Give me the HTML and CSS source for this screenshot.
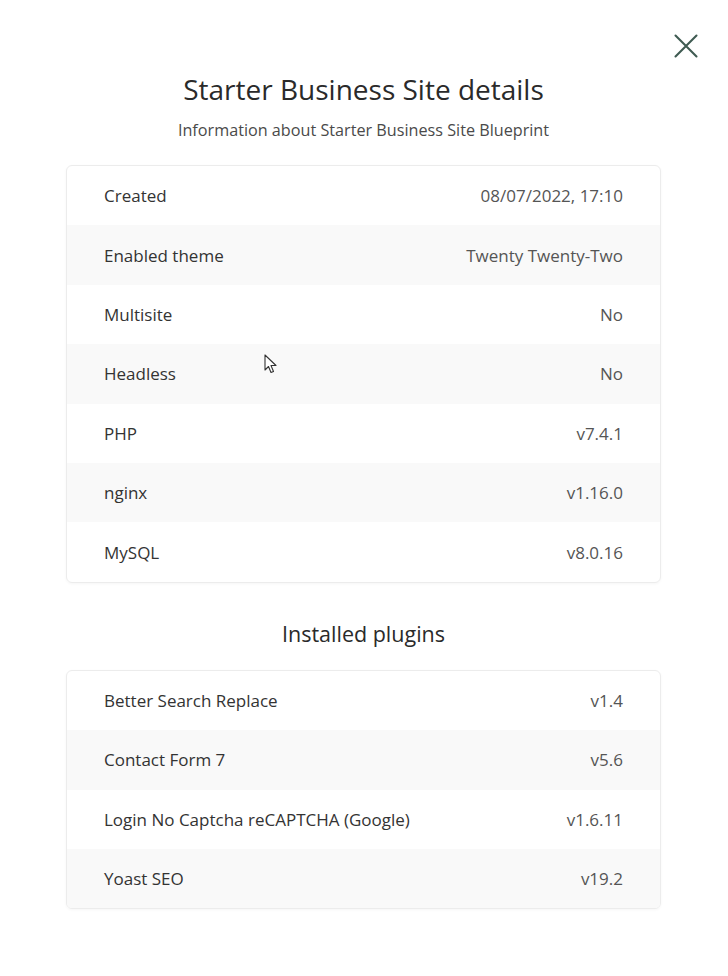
FILE: index.html
```html
<!DOCTYPE html>
<html>
<head>
<meta charset="utf-8">
<link rel="stylesheet" href="styles.css">
</head>
<body>
<div class="modal">
  <button class="close" aria-label="Close">
    <svg width="26" height="26" viewBox="0 0 26 26"><path d="M2.5 2.5 L23.5 23.5 M23.5 2.5 L2.5 23.5" stroke="#3f5b52" stroke-width="2.1" fill="none" stroke-linecap="round"/></svg>
  </button>
  <h1 class="title">Starter Business Site details</h1>
  <p class="subtitle">Information about Starter Business Site Blueprint</p>
  <div class="card">
    <div class="row"><span class="label">Created</span><span class="value">08/07/2022, 17:10</span></div>
    <div class="row"><span class="label">Enabled theme</span><span class="value">Twenty Twenty-Two</span></div>
    <div class="row"><span class="label">Multisite</span><span class="value">No</span></div>
    <div class="row"><span class="label">Headless</span><span class="value">No</span></div>
    <div class="row"><span class="label">PHP</span><span class="value">v7.4.1</span></div>
    <div class="row"><span class="label">nginx</span><span class="value">v1.16.0</span></div>
    <div class="row"><span class="label">MySQL</span><span class="value">v8.0.16</span></div>
  </div>
  <h2 class="section">Installed plugins</h2>
  <div class="card">
    <div class="row"><span class="label">Better Search Replace</span><span class="value">v1.4</span></div>
    <div class="row"><span class="label">Contact Form 7</span><span class="value">v5.6</span></div>
    <div class="row"><span class="label">Login No Captcha reCAPTCHA (Google)</span><span class="value">v1.6.11</span></div>
    <div class="row"><span class="label">Yoast SEO</span><span class="value">v19.2</span></div>
  </div>
  <svg class="cursor" width="16" height="22" viewBox="0 0 16 22"><path d="M1 1 L1 16 L4.5 12.5 L7 18.5 L9.5 17.5 L7 11.5 L12 11.5 Z" fill="#fff" stroke="#333" stroke-width="1.1" stroke-linejoin="round"/></svg>
</div>
</body>
</html>
```
FILE: styles.css
```css
html, body {
  margin: 0;
  padding: 0;
  background: #ffffff;
}
body {
  font-family: "Open Sans", Lato, sans-serif;
  color: #333;
}
.modal {
  position: relative;
  width: 728px;
  height: 976px;
  box-sizing: border-box;
  padding: 71px 67px 0 66px;
}
.close {
  position: absolute;
  top: 33px;
  right: 29px;
  width: 26px;
  height: 26px;
  padding: 0;
  border: 0;
  background: none;
}
.close svg { display: block; }
.title {
  margin: 0;
  text-align: center;
  font-size: 28px;
  font-weight: 400;
  line-height: 36px;
  color: #2a2a2a;
}
.subtitle {
  margin: 13px 0 0;
  text-align: center;
  font-size: 16.2px;
  line-height: 21px;
  color: #4a4a4a;
}
.card {
  margin-top: 24px;
  border: 1px solid #ececec;
  border-radius: 6px;
  overflow: hidden;
  box-shadow: 0 1px 3px rgba(0,0,0,0.04);
}
.row {
  display: flex;
  justify-content: space-between;
  align-items: center;
  height: 59.4px;
  padding: 0 37px 0 37px;
  font-size: 17px;
}
.row:nth-child(even) { background: #f9f9f9; }
.label { color: #333; }
.value { color: #555; }
.section {
  margin: 37px 0 0;
  text-align: center;
  font-size: 21.5px;
  font-weight: 400;
  line-height: 28px;
  color: #2a2a2a;
}
.section + .card { margin-top: 22px; }
.cursor {
  position: absolute;
  left: 264px;
  top: 354px;
}
```
